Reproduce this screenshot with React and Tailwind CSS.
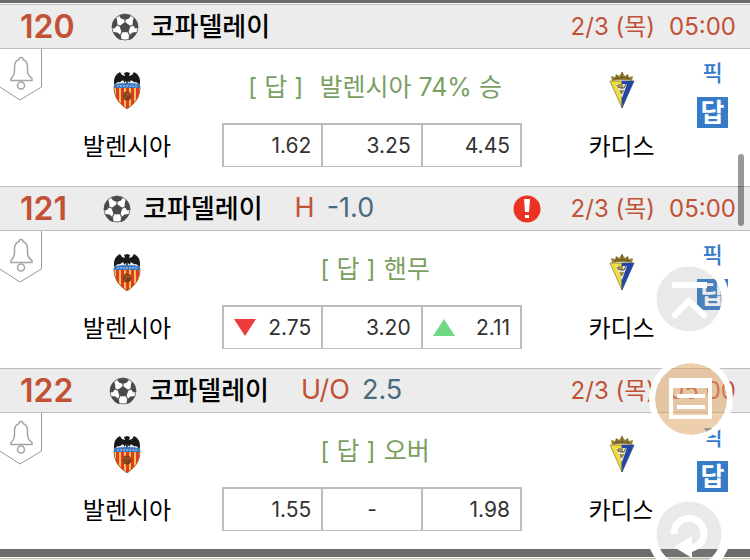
import React from 'react';

const matches = [
  {
    no: 120,
    league: '코파델레이',
    date: '2/3 (목)',
    time: '05:00',
    home: '발렌시아',
    away: '카디스',
    tip: ['[ 답 ]', '발렌시아 74% 승'],
    wide: true,
    odds: [{ value: '1.62' }, { value: '3.25' }, { value: '4.45' }],
  },
  {
    no: 121,
    league: '코파델레이',
    type: 'H',
    line: '-1.0',
    alert: true,
    date: '2/3 (목)',
    time: '05:00',
    home: '발렌시아',
    away: '카디스',
    tip: ['[ 답 ]', '핸무'],
    odds: [{ value: '2.75', move: 'down' }, { value: '3.20' }, { value: '2.11', move: 'up' }],
  },
  {
    no: 122,
    league: '코파델레이',
    type: 'U/O',
    line: '2.5',
    date: '2/3 (목)',
    time: '05:00',
    home: '발렌시아',
    away: '카디스',
    tip: ['[ 답 ]', '오버'],
    odds: [{ value: '1.55' }, { value: '-' }, { value: '1.98' }],
  },
];

const Ball = () => (
  <svg viewBox="0 0 28 28" className="w-7 h-7" aria-hidden="true">
    <circle cx="14" cy="14" r="13" fill="#fff" stroke="#777" strokeWidth="1" />
    <g fill="#4a4a4a">
      <path d="M14 9l5.500 4-2.100 6.200h-6.800L8.500 13z" />
      <path d="M8 2.700Q14-.5 20 2.700L18 5.500 14 7 10 5.500z" />
      <path d="M23 4.500Q27.500 9 27 15l-2.500.5-3-3.500.5-5z" />
      <path d="M5 4.500Q.5 9 1 15l2.500.5 3-3.500L6 7z" />
      <path d="M2 19l4.500.5 3.500 3 .5 4.500Q5 26 2 19z" />
      <path d="M26 19l-4.500.5-3.500 3-.5 4.500Q23 26 26 19z" />
    </g>
    <path d="M14 6v4M6 12l3.500 1.300M22 12l-3.500 1.300M11 18.500L9.500 22M17 18.500l1.500 3.500" stroke="#666" strokeWidth="1.300" />
  </svg>
);

const ValenciaCrest = () => (
  <svg viewBox="0 0 28 38" className="w-7 h-[38px]" aria-hidden="true">
    <defs>
      <clipPath id="shield">
        <path d="M1 15Q0 29 14 38 28 29 27 15z" />
      </clipPath>
    </defs>
    <g clipPath="url(#shield)">
      <path d="M0 13h28v25H0z" fill="#f6c445" />
      <path d="M3 16h3v22H3zM8 16h3v22H8zM13 16h3v22h-3zM18 16h3v22h-3zM23 16h3v22h-3z" fill="#e0392b" />
    </g>
    <path d="M1 15Q0 29 14 38 28 29 27 15" fill="none" stroke="#a9643c" strokeWidth="1" />
    <path d="M1 14Q0 4 7 1l2 3 3 1-1-3 3-1 3 1-1 3 3-1 2-3q7 3 6 13l-4-3-2 1-3-3-2 4h-4l-2-4-3 3-2-1z" fill="#191919" />
    <path d="M5 12l4-2 2 2 3-3 3 3 2-2 4 2v2H5z" fill="#e8edf2" />
    <path d="M14 7v7M11 9h6" stroke="#191919" strokeWidth="1.500" />
    <path d="M1 13q13-2 26 0v4H1z" fill="#3f78c0" />
    <path d="M4 15h20" stroke="#b8d0ed" strokeWidth="1" strokeDasharray="2 1" />
    <circle cx="14" cy="25" r="4.500" fill="#7d3e1c" />
    <path d="M10 24q4-3 8 1M11 28q2-4 6-5" fill="none" stroke="#b9702c" strokeWidth=".7" />
  </svg>
);

const CadizCrest = () => (
  <svg viewBox="0 0 26 38" className="w-[26px] h-[38px]" aria-hidden="true">
    <path d="M1 10h12v27z" fill="#f0dc3c" stroke="#8d813c" strokeWidth=".8" />
    <path d="M25 10H13v27z" fill="#2146a8" stroke="#344b89" strokeWidth=".8" />
    <path d="M7 13h11l-5 14z" fill="#ece9df" />
    <path d="M9 13h5v4H9zM10 19h6l-3 4z" fill="#a99350" />
    <path d="M8 14l2 3M17 13l-2 4M11 17h4M12 20v3" stroke="#50543b" strokeWidth="1" />
    <path d="M3 10L2 5l4 1 1-3 3 2 3-4 3 4 3-2 1 3 4-1-1 5q-10-2-20 0z" fill="#9b8435" />
    <path d="M5 8q8-3 16 0M13 1v7M8 4v3M18 4v3" fill="none" stroke="#5e502a" strokeWidth="1" />
  </svg>
);

const BellTag = () => (
  <button type="button" aria-label="알림" className="absolute left-0 top-0">
    <svg viewBox="0 0 43 52" className="w-[43px] h-[52px]" fill="none" stroke="#999">
      <path d="M-1 37.500L20 51l21.500-13V0" strokeWidth="1" />
      <path d="M11 31.500v-2q3.500-3 3.500-8V18q0-6 4.500-7.500 0-2 2-2t2 2q4.500 1.500 4.500 7.500v3.500q0 5 4.500 8v2z" stroke="#a3a3a3" strokeWidth="1.500" />
      <circle cx="21" cy="36.500" r="3.500" stroke="#a3a3a3" strokeWidth="1.500" />
    </svg>
  </button>
);

const Move = ({ dir }) => (
  <svg viewBox="0 0 22 17" className="w-[22px] h-[17px]" aria-hidden="true">
    {dir === 'down' ? <path d="M0 0h22L11 17z" fill="#ee3a3d" /> : <path d="M0 17h22L11 0z" fill="#70d885" />}
  </svg>
);

const Team = ({ name, crest }) => (
  <div className="flex flex-col items-center pt-[22px]">
    {crest}
    <span className="mt-[22px] text-2xl leading-8 text-black">{name}</span>
  </div>
);

const MatchRow = ({ match }) => (
  <section>
    <header className="h-[45px] flex items-center bg-[#ececec] border-y border-[#bcbcbc] pl-5 pr-[14px]">
      <span className="text-[32px] font-semibold text-[#c25136]">{match.no}</span>
      <span className="ml-9 shrink-0"><Ball /></span>
      <h2 className="ml-3 text-[26px] font-medium text-black">{match.league}</h2>
      {match.type && <span className="ml-8 text-[27px] text-[#c25136]">{match.type}</span>}
      {match.line && <span className="ml-3 text-[27px] text-[#486b7e]">{match.line}</span>}
      <div className="ml-auto flex items-center text-2xl text-[#c25136]">
        {match.alert && (
          <svg viewBox="0 0 28 28" className="w-7 h-7 mr-[30px]" role="img" aria-label="주의">
            <circle cx="14" cy="14" r="13.500" fill="#ea3323" />
            <path d="M11 4h6l-1 13h-4zM12 20h4v3h-4z" fill="#fff" />
          </svg>
        )}
        <span>{match.date}</span>
        <span className="ml-[14px]">{match.time}</span>
      </div>
    </header>

    <div className="relative h-[137px] grid grid-cols-[222fr_300fr_228fr]">
      <BellTag />
      <div className="pl-8">
        <Team name={match.home} crest={<ValenciaCrest />} />
      </div>

      <div className="pt-5">
        <p className={`pl-[6px] flex justify-center text-[25px] leading-9 text-[#7a9f62] ${match.wide ? 'gap-4' : 'gap-2'}`}>
          <span>{match.tip[0]}</span>
          <span>{match.tip[1]}</span>
        </p>
        <div className="mt-[18px] h-11 grid grid-cols-3 border-l-2 border-t-2 border-b border-[#bcbcbc] text-[21px] text-[#333]">
          {match.odds.map((odd, i) => (
            <button
              key={i}
              type="button"
              className={`flex items-center border-r-2 border-[#bcbcbc] px-[10px] ${odd.move ? 'justify-between' : odd.value === '-' ? 'justify-center' : 'justify-end'}`}
            >
              {odd.move && <Move dir={odd.move} />}
              {odd.value}
            </button>
          ))}
        </div>
      </div>

      <div className="flex pr-[22px]">
        <div className="flex-1 pl-6">
          <Team name={match.away} crest={<CadizCrest />} />
        </div>
        <div className="w-[31px] pt-2 flex flex-col items-center text-[#367bc8]">
          <button type="button" className="text-[22px] leading-8 font-medium">픽</button>
          <button type="button" className="mt-2 w-[31px] h-[31px] bg-[#367bc8] text-white text-[26px] leading-[31px] font-bold">답</button>
        </div>
      </div>
    </div>
  </section>
);

// Floating shortcuts on the right edge, over the list
const FloatingButtons = () => (
  <>
    <button type="button" aria-label="맨 위로" className="fixed right-[19px] top-[257px]">
      <svg viewBox="0 0 84 84" className="w-[84px] h-[84px]">
        <circle cx="42" cy="42" r="36.500" fill="none" stroke="#fff" strokeWidth="8" />
        <circle cx="42" cy="42" r="32.500" fill="#919191" fillOpacity=".2" />
        <path d="M25 28h35M26 60l16-16 17 16" fill="none" stroke="#fff" strokeWidth="6" />
      </svg>
    </button>
    <button type="button" aria-label="목록" className="fixed right-[17px] top-[357px]">
      <svg viewBox="0 0 84 84" className="w-[84px] h-[84px]">
        <circle cx="42" cy="42" r="36" fill="#db9f5d" fillOpacity=".5" />
        <circle cx="42" cy="42" r="39" fill="none" stroke="#fff" strokeWidth="6" />
        <path d="M20 21h43v10H20z" fill="#fff" />
        <path d="M22 23h39v37H22zM28 39h28M28 50h28" fill="none" stroke="#fff" strokeWidth="4" />
      </svg>
    </button>
    <button type="button" aria-label="새로고침" className="fixed right-[19px] top-[492px]">
      <svg viewBox="0 0 84 84" className="w-[84px] h-[84px]">
        <circle cx="42" cy="42" r="37" fill="none" stroke="#fff" strokeWidth="9" />
        <circle cx="42" cy="42" r="32.500" fill="#919191" fillOpacity=".2" />
        <path d="M27 42a15 15 0 1 1 23 12L43 57" fill="none" stroke="#fff" strokeWidth="7" />
        <path d="M45 44v22L27 55z" fill="#fff" />
      </svg>
    </button>
  </>
);

export default function App() {
  return (
    <main className="bg-white font-[Inter,'Noto_Sans_CJK_KR',sans-serif]">
      <div className="h-[3px] mb-px bg-[#6b6b6b]" />
      {matches.map((match) => (
        <MatchRow key={match.no} match={match} />
      ))}
      <div className="-mt-px h-2 bg-[#6b6b6b]" />
      <div className="mt-px h-[2px] bg-[#f3efe5] border-t border-[#bdb9ac]" />
      <FloatingButtons />
      <div className="fixed right-[6px] top-[154px] w-[6px] h-[72px] rounded-full bg-black/40" />
    </main>
  );
}
